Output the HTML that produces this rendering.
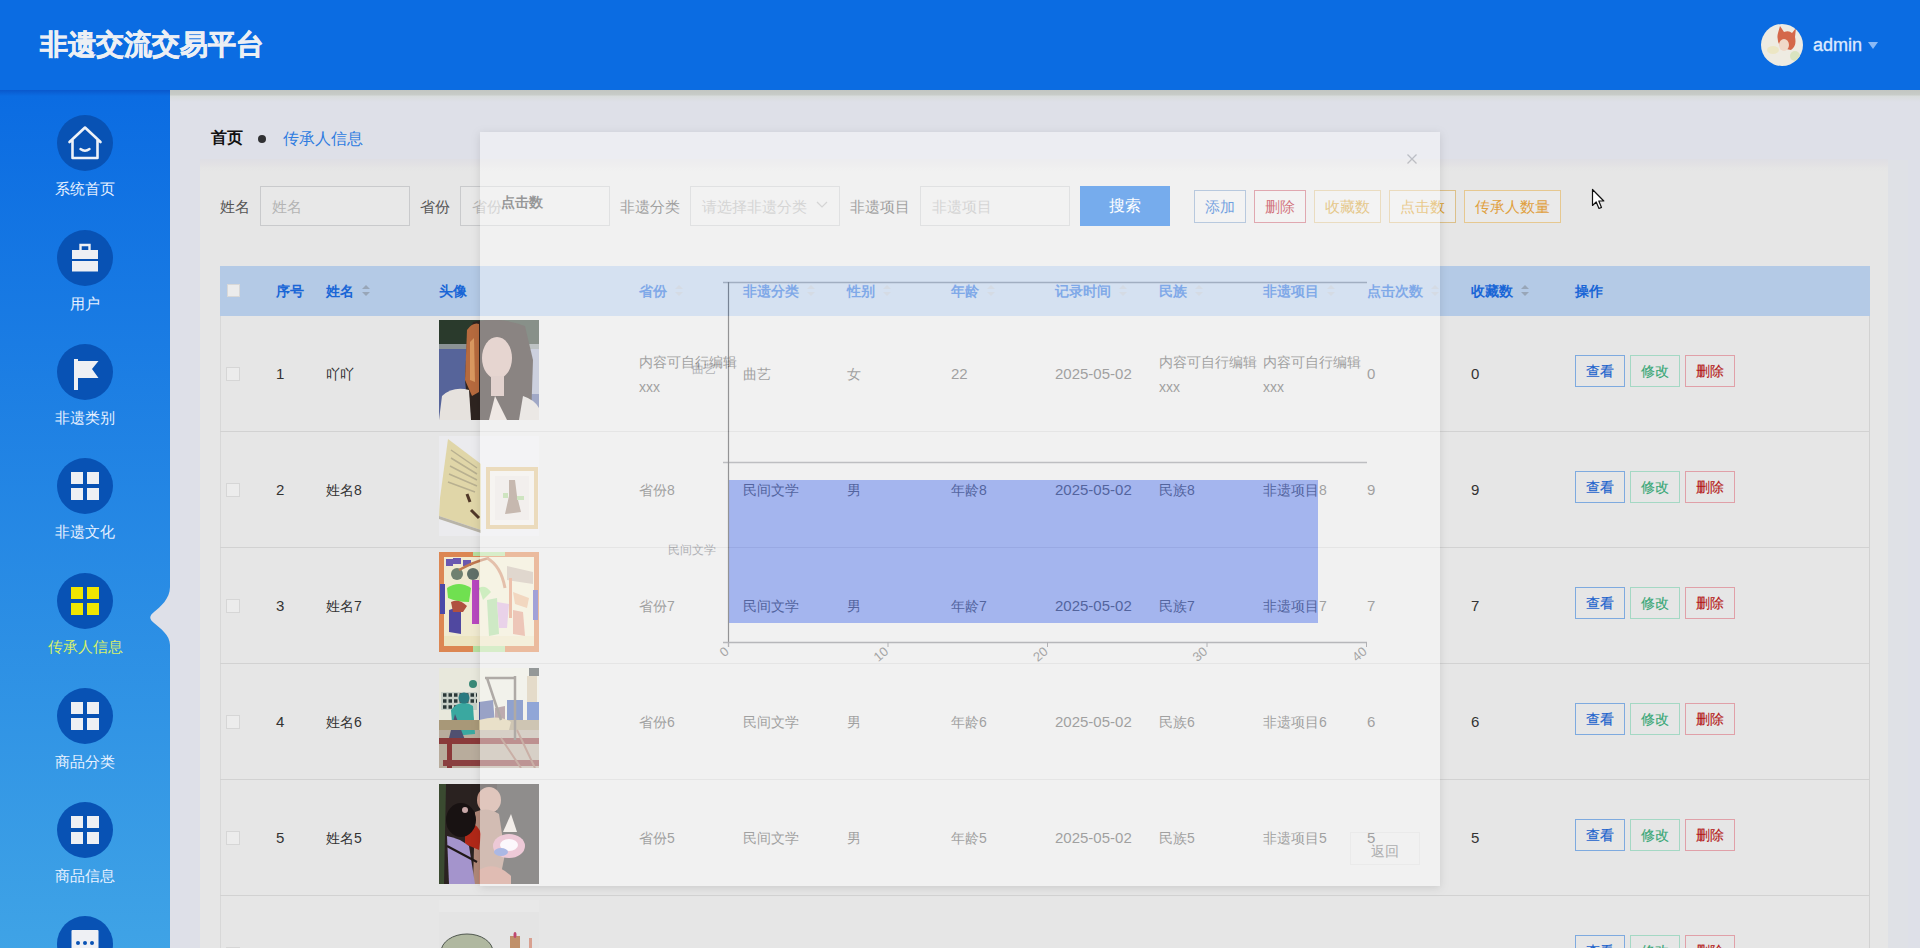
<!DOCTYPE html>
<html><head><meta charset="utf-8"><style>
*{box-sizing:border-box;margin:0;padding:0}
html,body{width:1920px;height:948px;overflow:hidden}
body{font-family:"Liberation Sans",sans-serif;background:#dee0e8;position:relative;color:#333}
.a{position:absolute;white-space:nowrap}
#hdr{left:0;top:0;width:1920px;height:90px;background:#0b6ce2}
#side{left:0;top:90px;width:170px;height:858px;background:linear-gradient(#0a58cc 0,#0b6ce2 6px,#3fa3e6 100%)}
#hshadow{left:170px;top:90px;width:1750px;height:12px;background:linear-gradient(#c2c6c2 0,#c8ccc8 5px,#d8dcdc 6px,#dee0e8 12px)}
.ic{position:absolute;left:57px;width:56px;height:56px;border-radius:50%;background:#0852b4}
.ic svg{position:absolute;left:0;top:0}
.lb{position:absolute;left:0;width:170px;text-align:center;font-size:15px;line-height:15px;color:#e8f1ff}
.inp{position:absolute;height:40px;width:150px;border:1px solid #c9cacc;background:#e8e8e8}
.tb{position:absolute;height:33px;border:1px solid;font-size:15px;line-height:31px;text-align:center;background:#eaeaea}
.ob{position:absolute;width:50px;height:32px;border:1px solid;font-size:14px;line-height:30px;text-align:center;-webkit-text-stroke:0.15px currentColor}
.cb{position:absolute;left:226px;width:14px;height:14px;border:1px solid #d6d6d6;background:#ececec}
.img{position:absolute;left:439px;width:100px;height:100px;overflow:hidden}
.arr{position:absolute;width:0;height:0;border-left:4px solid transparent;border-right:4px solid transparent}
</style></head><body>
<div id="hdr" class="a"></div>
<div class="a" style="left:40px;top:31px;font-size:28px;line-height:28px;color:#eceff4;font-weight:bold;-webkit-text-stroke:0.6px #eceff4;">非遗交流交易平台</div>
<div class="a" style="left:1761px;top:24px;width:42px;height:42px;border-radius:50%;overflow:hidden;background:#eeebe2"><svg width="42" height="42"><path d="M17 9 L19 2 L23 8 Q28 6 31 9 L35 4 L34 13 Q36 22 30 26 L20 24 Q15 16 17 9Z" fill="#d4674a"/><ellipse cx="23" cy="21" rx="5" ry="6" fill="#f0d8c8"/><ellipse cx="12" cy="26" rx="6" ry="4" fill="#ece6c4"/><ellipse cx="34" cy="32" rx="5" ry="5" fill="#dae4c0"/></svg></div>
<div class="a" style="left:1813px;top:36px;font-size:18px;line-height:18px;color:#dce9ff;-webkit-text-stroke:0.35px #dce9ff;">admin</div>
<div class="a" style="left:1868px;top:42px;width:0;height:0;border-left:5px solid transparent;border-right:5px solid transparent;border-top:7px solid #8cbaf6"></div>
<div id="side" class="a"></div>
<div class="ic" style="top:115px"><svg width="56" height="56"><path d="M12.5 27 L28 12.5 L43.5 27 M15.5 24.5 V43 H40.5 V24.5" fill="none" stroke="#eef2f8" stroke-width="2.6" stroke-linejoin="round" stroke-linecap="round"/><path d="M23.5 34 Q28 37.5 32.5 34" fill="none" stroke="#eef2f8" stroke-width="2.4" stroke-linecap="round"/></svg></div>
<div class="lb" style="top:181px;color:#e8f1ff">系统首页</div>
<div class="ic" style="top:230px"><svg width="56" height="56"><path d="M23.5 20.5 V15 H32.5 V20.5" fill="none" stroke="#eef0f4" stroke-width="2.4"/><rect x="15" y="20" width="26" height="9" fill="#eef0f4"/><rect x="15" y="31" width="26" height="10.5" fill="#eef0f4"/></svg></div>
<div class="lb" style="top:296px;color:#e8f1ff">用户</div>
<div class="ic" style="top:344px"><svg width="56" height="56"><rect x="17" y="15" width="4" height="31" fill="#eef0f4"/><path d="M21 17 H41.5 L35 25 L41.5 34 H21Z" fill="#eef0f4"/></svg></div>
<div class="lb" style="top:410px;color:#e8f1ff">非遗类别</div>
<div class="ic" style="top:458px"><svg width="56" height="56"><rect x="14" y="14" width="12" height="12" fill="#eef0f4"/><rect x="30" y="14" width="12" height="12" fill="#eef0f4"/><rect x="14" y="30" width="12" height="12" fill="#eef0f4"/><rect x="30" y="30" width="12" height="12" fill="#eef0f4"/></svg></div>
<div class="lb" style="top:524px;color:#e8f1ff">非遗文化</div>
<div class="ic" style="top:573px"><svg width="56" height="56"><rect x="14" y="14" width="12" height="12" fill="#f0e600"/><rect x="30" y="14" width="12" height="12" fill="#f0e600"/><rect x="14" y="30" width="12" height="12" fill="#f0e600"/><rect x="30" y="30" width="12" height="12" fill="#f0e600"/></svg></div>
<div class="lb" style="top:639px;color:#d6f06a">传承人信息</div>
<div class="ic" style="top:688px"><svg width="56" height="56"><rect x="14" y="14" width="12" height="12" fill="#eef0f4"/><rect x="30" y="14" width="12" height="12" fill="#eef0f4"/><rect x="14" y="30" width="12" height="12" fill="#eef0f4"/><rect x="30" y="30" width="12" height="12" fill="#eef0f4"/></svg></div>
<div class="lb" style="top:754px;color:#e8f1ff">商品分类</div>
<div class="ic" style="top:802px"><svg width="56" height="56"><rect x="14" y="14" width="12" height="12" fill="#eef0f4"/><rect x="30" y="14" width="12" height="12" fill="#eef0f4"/><rect x="14" y="30" width="12" height="12" fill="#eef0f4"/><rect x="30" y="30" width="12" height="12" fill="#eef0f4"/></svg></div>
<div class="lb" style="top:868px;color:#e8f1ff">商品信息</div>
<div class="ic" style="top:916px"><svg width="56" height="56"><rect x="14.5" y="14" width="27" height="30" rx="1" fill="#eef0f4"/><circle cx="21" cy="27" r="2" fill="#0852b4"/><circle cx="28" cy="27" r="2" fill="#0852b4"/><circle cx="35" cy="27" r="2" fill="#0852b4"/></svg></div>
<svg class="a" style="left:148px;top:587px" width="22" height="58"><path d="M22 0 C22 12 12 20 6 25 C1 29 1 32 6 36 C12 41 22 48 22 58Z" fill="#dee0e8"/></svg>
<div id="hshadow" class="a"></div>
<div class="a" style="left:211px;top:130px;font-size:16px;line-height:16px;color:#111;font-weight:bold;">首页</div>
<div class="a" style="left:258px;top:135px;width:8px;height:8px;border-radius:50%;background:#303133"></div>
<div class="a" style="left:283px;top:131px;font-size:16px;line-height:16px;color:#2f7ce0;">传承人信息</div>
<div class="a" style="left:1888px;top:160px;width:20px;height:788px;background:#dfe1e6"></div>
<div class="a" style="left:200px;top:159px;width:1688px;height:789px;background:linear-gradient(#dfdfe4 0,#e2e1e4 5px,#e5e5e5 9px,#e6e6e6 13px)"></div>
<div class="a" style="left:220px;top:199px;font-size:15px;line-height:15px;color:#555;">姓名</div>
<div class="inp" style="left:260px;top:186px"></div>
<div class="a" style="left:272px;top:199px;font-size:15px;line-height:15px;color:#b4b4b4;">姓名</div>
<div class="a" style="left:420px;top:199px;font-size:15px;line-height:15px;color:#555;">省份</div>
<div class="inp" style="left:460px;top:186px"></div>
<div class="a" style="left:472px;top:199px;font-size:15px;line-height:15px;color:#b4b4b4;">省份</div>
<div class="a" style="left:620px;top:199px;font-size:15px;line-height:15px;color:#555;">非遗分类</div>
<div class="inp" style="left:690px;top:186px"></div>
<div class="a" style="left:702px;top:199px;font-size:15px;line-height:15px;color:#b4b4b4;">请选择非遗分类</div>
<svg class="a" style="left:816px;top:201px" width="12" height="8"><path d="M1 1 L6 6 L11 1" fill="none" stroke="#b4b4b4" stroke-width="1.2"/></svg>
<div class="a" style="left:850px;top:199px;font-size:15px;line-height:15px;color:#555;">非遗项目</div>
<div class="inp" style="left:920px;top:186px"></div>
<div class="a" style="left:932px;top:199px;font-size:15px;line-height:15px;color:#b4b4b4;">非遗项目</div>
<div class="a" style="left:1080px;top:186px;width:90px;height:40px;background:#0b6be0;color:#fff;font-size:16px;line-height:40px;text-align:center">搜索</div>
<div class="tb" style="left:1194px;top:190px;width:52px;color:#0058c8;border-color:#80a0c4">添加</div>
<div class="tb" style="left:1254px;top:190px;width:52px;color:#b00010;border-color:#c86472">删除</div>
<div class="tb" style="left:1314px;top:190px;width:67px;color:#d29d2e;border-color:#dac18f">收藏数</div>
<div class="tb" style="left:1389px;top:190px;width:67px;color:#d8a030;border-color:#dcc08a">点击数</div>
<div class="tb" style="left:1464px;top:190px;width:97px;color:#e0a040;border-color:#e6c890">传承人数量</div>
<div class="a" style="left:220px;top:266px;width:1650px;height:682px;background:#e6e6e6;border-right:1px solid #d2d2d2;border-left:1px solid #d8d8d8"></div>
<div class="a" style="left:220px;top:266px;width:1650px;height:50px;background:#b4cae6"></div>
<div class="a" style="left:227px;top:284px;width:13px;height:13px;background:#ececec;border:1px solid #d8d8d8"></div>
<div class="a" style="left:276px;top:284px;font-size:14px;line-height:14px;color:#1a66d6;font-weight:bold;">序号</div>
<div class="a" style="left:326px;top:284px;font-size:14px;line-height:14px;color:#1a66d6;font-weight:bold;">姓名</div>
<div class="arr" style="left:362px;top:285px;border-bottom:4px solid #98a6b8"></div>
<div class="arr" style="left:362px;top:292px;border-top:4px solid #98a6b8"></div>
<div class="a" style="left:439px;top:284px;font-size:14px;line-height:14px;color:#1a66d6;font-weight:bold;">头像</div>
<div class="a" style="left:639px;top:284px;font-size:14px;line-height:14px;color:#1a66d6;font-weight:bold;">省份</div>
<div class="arr" style="left:675px;top:285px;border-bottom:4px solid #b4c0d0"></div>
<div class="arr" style="left:675px;top:292px;border-top:4px solid #b4c0d0"></div>
<div class="a" style="left:743px;top:284px;font-size:14px;line-height:14px;color:#1a66d6;font-weight:bold;">非遗分类</div>
<div class="arr" style="left:807px;top:285px;border-bottom:4px solid #b4c0d0"></div>
<div class="arr" style="left:807px;top:292px;border-top:4px solid #b4c0d0"></div>
<div class="a" style="left:847px;top:284px;font-size:14px;line-height:14px;color:#1a66d6;font-weight:bold;">性别</div>
<div class="arr" style="left:883px;top:285px;border-bottom:4px solid #b4c0d0"></div>
<div class="arr" style="left:883px;top:292px;border-top:4px solid #b4c0d0"></div>
<div class="a" style="left:951px;top:284px;font-size:14px;line-height:14px;color:#1a66d6;font-weight:bold;">年龄</div>
<div class="arr" style="left:987px;top:285px;border-bottom:4px solid #b4c0d0"></div>
<div class="arr" style="left:987px;top:292px;border-top:4px solid #b4c0d0"></div>
<div class="a" style="left:1055px;top:284px;font-size:14px;line-height:14px;color:#1a66d6;font-weight:bold;">记录时间</div>
<div class="arr" style="left:1119px;top:285px;border-bottom:4px solid #b4c0d0"></div>
<div class="arr" style="left:1119px;top:292px;border-top:4px solid #b4c0d0"></div>
<div class="a" style="left:1159px;top:284px;font-size:14px;line-height:14px;color:#1a66d6;font-weight:bold;">民族</div>
<div class="arr" style="left:1195px;top:285px;border-bottom:4px solid #b4c0d0"></div>
<div class="arr" style="left:1195px;top:292px;border-top:4px solid #b4c0d0"></div>
<div class="a" style="left:1263px;top:284px;font-size:14px;line-height:14px;color:#1a66d6;font-weight:bold;">非遗项目</div>
<div class="arr" style="left:1327px;top:285px;border-bottom:4px solid #b4c0d0"></div>
<div class="arr" style="left:1327px;top:292px;border-top:4px solid #b4c0d0"></div>
<div class="a" style="left:1367px;top:284px;font-size:14px;line-height:14px;color:#1a66d6;font-weight:bold;">点击次数</div>
<div class="arr" style="left:1431px;top:285px;border-bottom:4px solid #b4c0d0"></div>
<div class="arr" style="left:1431px;top:292px;border-top:4px solid #b4c0d0"></div>
<div class="a" style="left:1471px;top:284px;font-size:14px;line-height:14px;color:#1a66d6;font-weight:bold;">收藏数</div>
<div class="arr" style="left:1521px;top:285px;border-bottom:4px solid #98a6b8"></div>
<div class="arr" style="left:1521px;top:292px;border-top:4px solid #98a6b8"></div>
<div class="a" style="left:1575px;top:284px;font-size:14px;line-height:14px;color:#1a66d6;font-weight:bold;">操作</div>
<div class="a" style="left:220px;top:431px;width:1650px;height:1px;background:#d2d2d2"></div>
<div class="cb" style="top:367px"></div>
<div class="img" style="top:320px"><svg width="100" height="100" viewBox="0 0 100 100">
<rect width="100" height="100" fill="#56649a"/>
<rect width="100" height="25" fill="#2a3a2c"/>
<rect y="24" width="100" height="5" fill="#8a9294"/>
<rect x="86" y="29" width="14" height="45" fill="#a4acc4"/>
<path d="M34 2 Q60 -4 86 6 L94 40 L92 100 H30 L26 60 L28 20Z" fill="#2e2420"/>
<path d="M28 10 Q34 2 40 4 L40 72 L33 76 L26 60Z" fill="#b66a3e"/>
<path d="M31 22 L35 18 L36 62 L31 60Z" fill="#d89860"/>
<ellipse cx="58" cy="38" rx="15" ry="21" fill="#d4b4ac"/>
<rect x="52" y="56" width="13" height="20" fill="#ccb0a8"/>
<path d="M0 100 L3 76 Q14 66 30 70 L32 100Z" fill="#e6e2de"/>
<path d="M84 76 Q96 80 100 88 V100 H80Z" fill="#dcd6d2"/>
<path d="M56 76 L68 100 H50Z" fill="#e4d6d0"/>
</svg></div>
<div class="ob" style="left:1575px;top:355px;color:#1a62cc;border-color:#7eaadf">查看</div>
<div class="ob" style="left:1630px;top:355px;color:#38a676;border-color:#a4d8c4">修改</div>
<div class="ob" style="left:1685px;top:355px;color:#b41818;border-color:#e0a0a8">删除</div>
<div class="a" style="left:276px;top:366px;font-size:15px;line-height:15px;color:#333;">1</div>
<div class="a" style="left:326px;top:367px;font-size:14px;line-height:14px;color:#333;">吖吖</div>
<div class="a" style="left:639px;top:355px;font-size:14px;line-height:14px;color:#555;">内容可自行编辑</div>
<div class="a" style="left:639px;top:380px;font-size:14px;line-height:14px;color:#555;">xxx</div>
<div class="a" style="left:743px;top:367px;font-size:14px;line-height:14px;color:#555;">曲艺</div>
<div class="a" style="left:847px;top:367px;font-size:14px;line-height:14px;color:#555;">女</div>
<div class="a" style="left:951px;top:366px;font-size:15px;line-height:15px;color:#555;">22</div>
<div class="a" style="left:1055px;top:366px;font-size:15px;line-height:15px;color:#555;">2025-05-02</div>
<div class="a" style="left:1159px;top:355px;font-size:14px;line-height:14px;color:#555;">内容可自行编辑</div>
<div class="a" style="left:1159px;top:380px;font-size:14px;line-height:14px;color:#555;">xxx</div>
<div class="a" style="left:1263px;top:355px;font-size:14px;line-height:14px;color:#555;">内容可自行编辑</div>
<div class="a" style="left:1263px;top:380px;font-size:14px;line-height:14px;color:#555;">xxx</div>
<div class="a" style="left:1367px;top:366px;font-size:15px;line-height:15px;color:#555;">0</div>
<div class="a" style="left:1471px;top:366px;font-size:15px;line-height:15px;color:#333;">0</div>
<div class="a" style="left:220px;top:547px;width:1650px;height:1px;background:#d2d2d2"></div>
<div class="cb" style="top:483px"></div>
<div class="img" style="top:436px"><svg width="100" height="100" viewBox="0 0 100 100">
<rect width="100" height="100" fill="#ebebee"/>
<path d="M9 3 L42 28 L42 94 L0 80 L1 62Z" fill="#e0d6a8"/>
<path d="M0 80 L42 94 L42 97 L0 83Z" fill="#b8b4a8"/>
<path d="M12 14 L38 32 M12 22 L38 38 M11 30 L38 44 M10 38 L38 50 M9 46 L36 56" stroke="#b8b090" stroke-width="1.5"/>
<path d="M28 58 L31 66 M32 74 L40 82" stroke="#503828" stroke-width="3"/>
<rect x="47" y="31" width="52" height="62" fill="#dcc088"/>
<rect x="51" y="35" width="44" height="54" fill="#f0ece6"/>
<rect x="56" y="40" width="34" height="44" fill="#e8e4e0"/>
<path d="M70 44 L76 44 L78 60 L82 76 L66 78 L70 60Z" fill="#9a8070"/>
<rect x="64" y="57" width="5" height="5" fill="#a8d090"/>
<rect x="78" y="60" width="7" height="4" fill="#a8d090"/>
</svg></div>
<div class="ob" style="left:1575px;top:471px;color:#1a62cc;border-color:#7eaadf">查看</div>
<div class="ob" style="left:1630px;top:471px;color:#38a676;border-color:#a4d8c4">修改</div>
<div class="ob" style="left:1685px;top:471px;color:#b41818;border-color:#e0a0a8">删除</div>
<div class="a" style="left:276px;top:482px;font-size:15px;line-height:15px;color:#333;">2</div>
<div class="a" style="left:326px;top:483px;font-size:14px;line-height:14px;color:#333;">姓名8</div>
<div class="a" style="left:639px;top:483px;font-size:14px;line-height:14px;color:#555;">省份8</div>
<div class="a" style="left:743px;top:483px;font-size:14px;line-height:14px;color:#555;">民间文学</div>
<div class="a" style="left:847px;top:483px;font-size:14px;line-height:14px;color:#555;">男</div>
<div class="a" style="left:951px;top:483px;font-size:14px;line-height:14px;color:#555;">年龄8</div>
<div class="a" style="left:1055px;top:482px;font-size:15px;line-height:15px;color:#555;">2025-05-02</div>
<div class="a" style="left:1159px;top:483px;font-size:14px;line-height:14px;color:#555;">民族8</div>
<div class="a" style="left:1263px;top:483px;font-size:14px;line-height:14px;color:#555;">非遗项目8</div>
<div class="a" style="left:1367px;top:482px;font-size:15px;line-height:15px;color:#555;">9</div>
<div class="a" style="left:1471px;top:482px;font-size:15px;line-height:15px;color:#333;">9</div>
<div class="a" style="left:220px;top:663px;width:1650px;height:1px;background:#d2d2d2"></div>
<div class="cb" style="top:599px"></div>
<div class="img" style="top:552px"><svg width="100" height="100" viewBox="0 0 100 100">
<rect width="100" height="100" fill="#dc8652"/>
<rect x="34" y="0" width="32" height="4" fill="#b8e0a0"/>
<rect x="34" y="94" width="32" height="6" fill="#b8e0a0"/>
<rect x="5" y="5" width="90" height="89" fill="#f0ead0"/>
<rect x="1" y="32" width="5" height="30" fill="#4a48a8"/>
<rect x="94" y="38" width="5" height="30" fill="#5a58b8"/>
<path d="M7 7 H14 V14 H7Z M14 6 H22 V12 H14Z M24 8 H32 V14 H24Z" fill="#6a58b0"/>
<circle cx="18" cy="22" r="6" fill="#708070"/><circle cx="34" cy="22" r="6" fill="#607068"/>
<path d="M20 18 Q34 10 50 6" stroke="#c07850" stroke-width="2.5" fill="none"/>
<path d="M33 28 H40 V72 H33Z" fill="#b848c0"/>
<path d="M8 36 Q20 28 32 36 L30 50 Q18 50 9 46Z" fill="#70e050"/>
<path d="M40 36 Q46 32 52 40 L44 48Z" fill="#a8e090"/>
<path d="M10 58 L22 54 L22 82 L10 80Z" fill="#5048a0"/>
<path d="M12 50 Q20 46 28 54 L24 60 L14 60Z" fill="#b05040"/>
<path d="M48 6 Q62 14 66 36" stroke="#d0906a" stroke-width="3" fill="none"/>
<path d="M68 14 L94 20 V32 L68 28Z" fill="#c8b8a8"/>
<rect x="70" y="26" width="3" height="40" fill="#e0906a"/>
<path d="M48 48 L58 46 L60 82 L50 84Z" fill="#a8d898"/>
<path d="M58 50 L70 52 L68 76 L60 76Z" fill="#d8b0d8"/>
<path d="M74 58 L84 60 L86 84 L74 82Z" fill="#e09a80"/>
<path d="M74 40 L90 46 L88 56 L76 52Z" fill="#e8b890"/>
<rect x="5" y="84" width="90" height="10" fill="#ece4c0"/>
</svg></div>
<div class="ob" style="left:1575px;top:587px;color:#1a62cc;border-color:#7eaadf">查看</div>
<div class="ob" style="left:1630px;top:587px;color:#38a676;border-color:#a4d8c4">修改</div>
<div class="ob" style="left:1685px;top:587px;color:#b41818;border-color:#e0a0a8">删除</div>
<div class="a" style="left:276px;top:598px;font-size:15px;line-height:15px;color:#333;">3</div>
<div class="a" style="left:326px;top:599px;font-size:14px;line-height:14px;color:#333;">姓名7</div>
<div class="a" style="left:639px;top:599px;font-size:14px;line-height:14px;color:#555;">省份7</div>
<div class="a" style="left:743px;top:599px;font-size:14px;line-height:14px;color:#555;">民间文学</div>
<div class="a" style="left:847px;top:599px;font-size:14px;line-height:14px;color:#555;">男</div>
<div class="a" style="left:951px;top:599px;font-size:14px;line-height:14px;color:#555;">年龄7</div>
<div class="a" style="left:1055px;top:598px;font-size:15px;line-height:15px;color:#555;">2025-05-02</div>
<div class="a" style="left:1159px;top:599px;font-size:14px;line-height:14px;color:#555;">民族7</div>
<div class="a" style="left:1263px;top:599px;font-size:14px;line-height:14px;color:#555;">非遗项目7</div>
<div class="a" style="left:1367px;top:598px;font-size:15px;line-height:15px;color:#555;">7</div>
<div class="a" style="left:1471px;top:598px;font-size:15px;line-height:15px;color:#333;">7</div>
<div class="a" style="left:220px;top:779px;width:1650px;height:1px;background:#d2d2d2"></div>
<div class="cb" style="top:715px"></div>
<div class="img" style="top:668px"><svg width="100" height="100" viewBox="0 0 100 100">
<rect width="100" height="100" fill="#b8ac9c"/>
<rect width="100" height="52" fill="#e8e8dc"/>
<rect x="90" y="0" width="10" height="8" fill="#404848"/>
<rect x="88" y="8" width="10" height="32" fill="#d0c0a0"/>
<path d="M2 24 H38 V42 H2Z" fill="#c8d0c8"/>
<path d="M4 27 H38 M4 33 H38 M4 39 H30" stroke="#2a3838" stroke-width="3.5" stroke-dasharray="3.5 2"/>
<circle cx="34" cy="16" r="4" fill="#3a8a78"/>
<path d="M12 42 Q22 30 34 38 L36 66 L14 68Z" fill="#3aa8a0"/>
<circle cx="25" cy="30" r="5.5" fill="#2a7a80"/>
<path d="M16 46 L10 70 L26 72Z" fill="#505070"/>
<path d="M40 34 L54 32 L56 56 L40 58Z" fill="#4a5a9a"/>
<path d="M56 40 L66 38 L66 56 L56 56Z" fill="#8a6a70"/>
<path d="M68 32 L84 32 L84 56 L68 56Z" fill="#3a5aa8"/>
<path d="M88 34 L100 34 L100 58 L88 58Z" fill="#3a60b8"/>
<path d="M0 52 H100 V62 H0Z" fill="#a89878"/>
<path d="M40 52 Q60 46 72 54 L70 62 L40 62Z" fill="#d8c8a0"/>
<rect x="0" y="70" width="100" height="6" fill="#8a3a3a"/>
<rect x="8" y="70" width="5" height="30" fill="#8a3838"/>
<rect x="4" y="92" width="96" height="6" fill="#8a4040"/>
<path d="M46 10 H76 M48 10 L62 52 M76 8 V72" stroke="#706860" stroke-width="2.5"/>
<path d="M78 62 L96 100 M62 70 L82 100" stroke="#a07060" stroke-width="2"/>
</svg></div>
<div class="ob" style="left:1575px;top:703px;color:#1a62cc;border-color:#7eaadf">查看</div>
<div class="ob" style="left:1630px;top:703px;color:#38a676;border-color:#a4d8c4">修改</div>
<div class="ob" style="left:1685px;top:703px;color:#b41818;border-color:#e0a0a8">删除</div>
<div class="a" style="left:276px;top:714px;font-size:15px;line-height:15px;color:#333;">4</div>
<div class="a" style="left:326px;top:715px;font-size:14px;line-height:14px;color:#333;">姓名6</div>
<div class="a" style="left:639px;top:715px;font-size:14px;line-height:14px;color:#555;">省份6</div>
<div class="a" style="left:743px;top:715px;font-size:14px;line-height:14px;color:#555;">民间文学</div>
<div class="a" style="left:847px;top:715px;font-size:14px;line-height:14px;color:#555;">男</div>
<div class="a" style="left:951px;top:715px;font-size:14px;line-height:14px;color:#555;">年龄6</div>
<div class="a" style="left:1055px;top:714px;font-size:15px;line-height:15px;color:#555;">2025-05-02</div>
<div class="a" style="left:1159px;top:715px;font-size:14px;line-height:14px;color:#555;">民族6</div>
<div class="a" style="left:1263px;top:715px;font-size:14px;line-height:14px;color:#555;">非遗项目6</div>
<div class="a" style="left:1367px;top:714px;font-size:15px;line-height:15px;color:#555;">6</div>
<div class="a" style="left:1471px;top:714px;font-size:15px;line-height:15px;color:#333;">6</div>
<div class="a" style="left:220px;top:895px;width:1650px;height:1px;background:#d2d2d2"></div>
<div class="cb" style="top:831px"></div>
<div class="img" style="top:784px"><svg width="100" height="100" viewBox="0 0 100 100">
<rect width="100" height="100" fill="#2a2220"/>
<rect x="58" width="42" height="100" fill="#383432"/>
<ellipse cx="50" cy="16" rx="12" ry="13" fill="#c89a8a"/>
<path d="M36 28 Q48 22 60 30 L66 70 L60 100 H34Z" fill="#b08878"/>
<path d="M26 42 Q38 36 42 50 L40 66 L26 60Z" fill="#b02818"/>
<ellipse cx="22" cy="36" rx="15" ry="17" fill="#181212"/>
<circle cx="26" cy="26" r="3" fill="#c8a8a8"/>
<path d="M8 52 Q20 54 30 62 L36 100 H10Z" fill="#a494cc"/>
<path d="M8 62 L38 78" stroke="#201818" stroke-width="2"/>
<ellipse cx="70" cy="62" rx="16" ry="12" fill="#e0a0b8"/>
<ellipse cx="70" cy="61" rx="9" ry="6" fill="#faf4fa"/>
<path d="M64 48 L72 30 L78 48Z" fill="#e8e0d8"/>
<ellipse cx="62" cy="68" rx="7" ry="4" fill="#6a80d0"/>
<path d="M0 0 V100 H5 L7 0Z" fill="#3a4a30"/>
<path d="M40 86 Q56 76 72 92 L72 100 H40Z" fill="#c88878"/>
</svg></div>
<div class="ob" style="left:1575px;top:819px;color:#1a62cc;border-color:#7eaadf">查看</div>
<div class="ob" style="left:1630px;top:819px;color:#38a676;border-color:#a4d8c4">修改</div>
<div class="ob" style="left:1685px;top:819px;color:#b41818;border-color:#e0a0a8">删除</div>
<div class="a" style="left:276px;top:830px;font-size:15px;line-height:15px;color:#333;">5</div>
<div class="a" style="left:326px;top:831px;font-size:14px;line-height:14px;color:#333;">姓名5</div>
<div class="a" style="left:639px;top:831px;font-size:14px;line-height:14px;color:#555;">省份5</div>
<div class="a" style="left:743px;top:831px;font-size:14px;line-height:14px;color:#555;">民间文学</div>
<div class="a" style="left:847px;top:831px;font-size:14px;line-height:14px;color:#555;">男</div>
<div class="a" style="left:951px;top:831px;font-size:14px;line-height:14px;color:#555;">年龄5</div>
<div class="a" style="left:1055px;top:830px;font-size:15px;line-height:15px;color:#555;">2025-05-02</div>
<div class="a" style="left:1159px;top:831px;font-size:14px;line-height:14px;color:#555;">民族5</div>
<div class="a" style="left:1263px;top:831px;font-size:14px;line-height:14px;color:#555;">非遗项目5</div>
<div class="a" style="left:1367px;top:830px;font-size:15px;line-height:15px;color:#555;">5</div>
<div class="a" style="left:1471px;top:830px;font-size:15px;line-height:15px;color:#333;">5</div>
<div class="a" style="left:220px;top:1011px;width:1650px;height:1px;background:#d2d2d2"></div>
<div class="cb" style="top:947px"></div>
<div class="img" style="top:900px"><svg width="100" height="100" viewBox="0 0 100 100">
<rect width="100" height="100" fill="#e8e8e8"/>
<rect x="0" y="12" width="100" height="88" fill="#e4e4e4"/>
<ellipse cx="28" cy="52" rx="26" ry="18" fill="#b0b8a0" stroke="#505850" stroke-width="1"/>
<rect x="71" y="36" width="10" height="20" fill="#c0906a"/>
<ellipse cx="76" cy="35" rx="1.5" ry="3" fill="#c04870"/>
<rect x="90" y="38" width="3" height="10" fill="#d8a090"/>
</svg></div>
<div class="ob" style="left:1575px;top:935px;color:#1a62cc;border-color:#7eaadf">查看</div>
<div class="ob" style="left:1630px;top:935px;color:#38a676;border-color:#a4d8c4">修改</div>
<div class="ob" style="left:1685px;top:935px;color:#b41818;border-color:#e0a0a8">删除</div>
<svg class="a" style="left:1591px;top:188px" width="14" height="22"><path d="M1.5 1.5 V17.5 L5.2 14 L8 20.5 L10.5 19.4 L7.8 13 H12.8Z" fill="#fff" stroke="#111" stroke-width="1.2" stroke-linejoin="round"/></svg>
<div class="a" style="left:480px;top:132px;width:960px;height:754px;opacity:0.44;box-shadow:0 2px 8px rgba(0,0,0,0.25)">
<div class="a" style="left:0;top:0;width:960px;height:754px;background:#fff"></div>
<div class="a" style="left:21px;top:63px;font-size:14px;line-height:14px;color:#303133;font-weight:bold;">点击数</div>
<svg class="a" style="left:927px;top:22px" width="10" height="10"><path d="M0.5 0.5 L9.5 9.5 M9.5 0.5 L0.5 9.5" stroke="#909399" stroke-width="1.3"/></svg>
<svg class="a" style="left:0;top:0" width="960" height="754"><rect x="248" y="348" width="590" height="143" fill="#5277fa"/><line x1="243" y1="150.5" x2="887" y2="150.5" stroke="#8a8c94" stroke-width="1.5"/><line x1="243" y1="330.5" x2="887" y2="330.5" stroke="#8a8c94" stroke-width="1.5"/><line x1="248.5" y1="150" x2="248.5" y2="515" stroke="#2a2a30" stroke-width="1.2"/><line x1="243" y1="510.5" x2="887" y2="510.5" stroke="#7a7c84" stroke-width="1.5"/><line x1="248.5" y1="510" x2="248.5" y2="515" stroke="#6e7079" stroke-width="1"/><text x="246.5" y="522" font-size="13" fill="#555" text-anchor="end" transform="rotate(-40 246.5 517)" font-family="Liberation Sans">0</text><line x1="408.0" y1="510" x2="408.0" y2="515" stroke="#6e7079" stroke-width="1"/><text x="406.0" y="522" font-size="13" fill="#555" text-anchor="end" transform="rotate(-40 406.0 517)" font-family="Liberation Sans">10</text><line x1="567.5" y1="510" x2="567.5" y2="515" stroke="#6e7079" stroke-width="1"/><text x="565.5" y="522" font-size="13" fill="#555" text-anchor="end" transform="rotate(-40 565.5 517)" font-family="Liberation Sans">20</text><line x1="727.0" y1="510" x2="727.0" y2="515" stroke="#6e7079" stroke-width="1"/><text x="725.0" y="522" font-size="13" fill="#555" text-anchor="end" transform="rotate(-40 725.0 517)" font-family="Liberation Sans">30</text><line x1="886.5" y1="510" x2="886.5" y2="515" stroke="#6e7079" stroke-width="1"/><text x="884.5" y="522" font-size="13" fill="#555" text-anchor="end" transform="rotate(-40 884.5 517)" font-family="Liberation Sans">40</text><text x="236" y="241" font-size="12" fill="#6e7079" text-anchor="end">曲艺</text><text x="236" y="422" font-size="12" fill="#6e7079" text-anchor="end">民间文学</text></svg>
<div class="a" style="left:870px;top:700px;width:70px;height:33px;border:1px solid #f0f0f0;background:#fff;font-size:14px;line-height:37px;text-align:center;color:#606266">返回</div>
</div>
</body></html>
